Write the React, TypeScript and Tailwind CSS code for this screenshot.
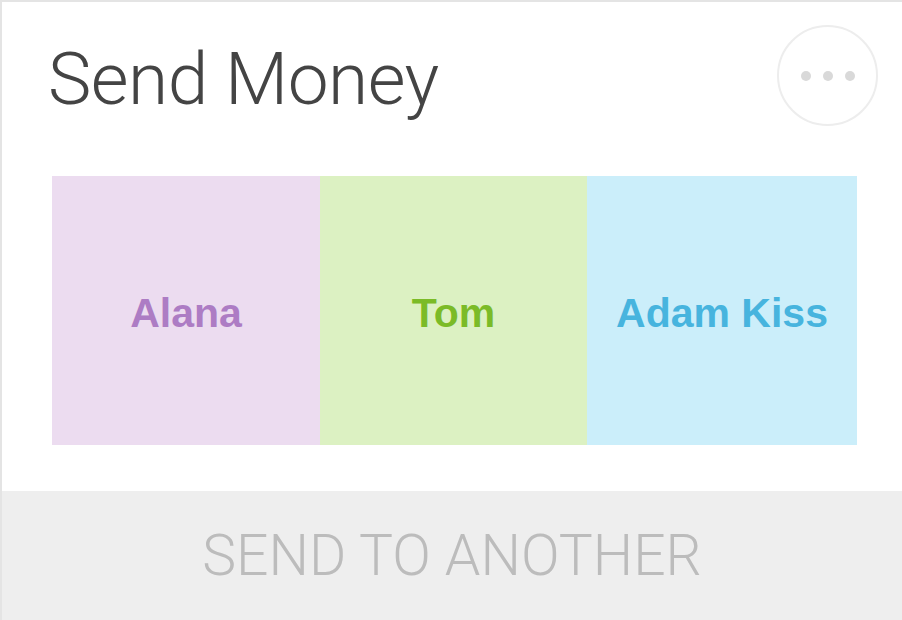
import React from 'react';

type Contact = { name: string; bg: string; fg: string };

const contacts: Contact[] = [
  { name: 'Alana', bg: 'bg-[#ecdcf0]', fg: 'text-[#ad7cc4]' },
  { name: 'Tom', bg: 'bg-[#dcf1c2]', fg: 'text-[#7bbb27]' },
  { name: 'Adam Kiss', bg: 'bg-[#cbeefa]', fg: 'text-[#47b4de]' },
];

const App: React.FC = () => {
  return (
    <div className="w-[902px] h-[620px] bg-white border-t-2 border-l-2 border-[#e4e4e4] flex flex-col overflow-hidden">
      {/* Header */}
      <div className="h-[174px] flex justify-between items-start pl-[46px] pr-[24px]">
        <h1 className="mt-[41px] text-[73px] leading-none font-light text-[#444] tracking-[-0.5px] font-['Roboto',sans-serif]">
          Send Money
        </h1>
        <button className="mt-[23px] w-[101px] h-[101px] rounded-full border-2 border-[#ededed] flex items-center justify-center gap-[12px]">
          <span className="w-[10px] h-[10px] rounded-full bg-[#d9d9d9]" />
          <span className="w-[10px] h-[10px] rounded-full bg-[#d9d9d9]" />
          <span className="w-[10px] h-[10px] rounded-full bg-[#d9d9d9]" />
        </button>
      </div>

      {/* Contacts */}
      <div className="ml-[50px] mr-[45px] h-[269px] grid grid-cols-[268px_267px_270px]">
        {contacts.map((c) => (
          <div key={c.name} className={`${c.bg} flex items-center justify-center pt-[6px]`}>
            <span className={`${c.fg} text-[41px] font-bold font-['Liberation_Sans',Arial,sans-serif]`}>
              {c.name}
            </span>
          </div>
        ))}
      </div>

      {/* Footer */}
      <button className="mt-[46px] flex-1 bg-[#eeeeee] flex items-center justify-center">
        <span className="text-[57px] font-light text-[#bcbcbc] font-['Roboto',sans-serif] leading-none">
          SEND TO ANOTHER
        </span>
      </button>
    </div>
  );
};

export default App;
